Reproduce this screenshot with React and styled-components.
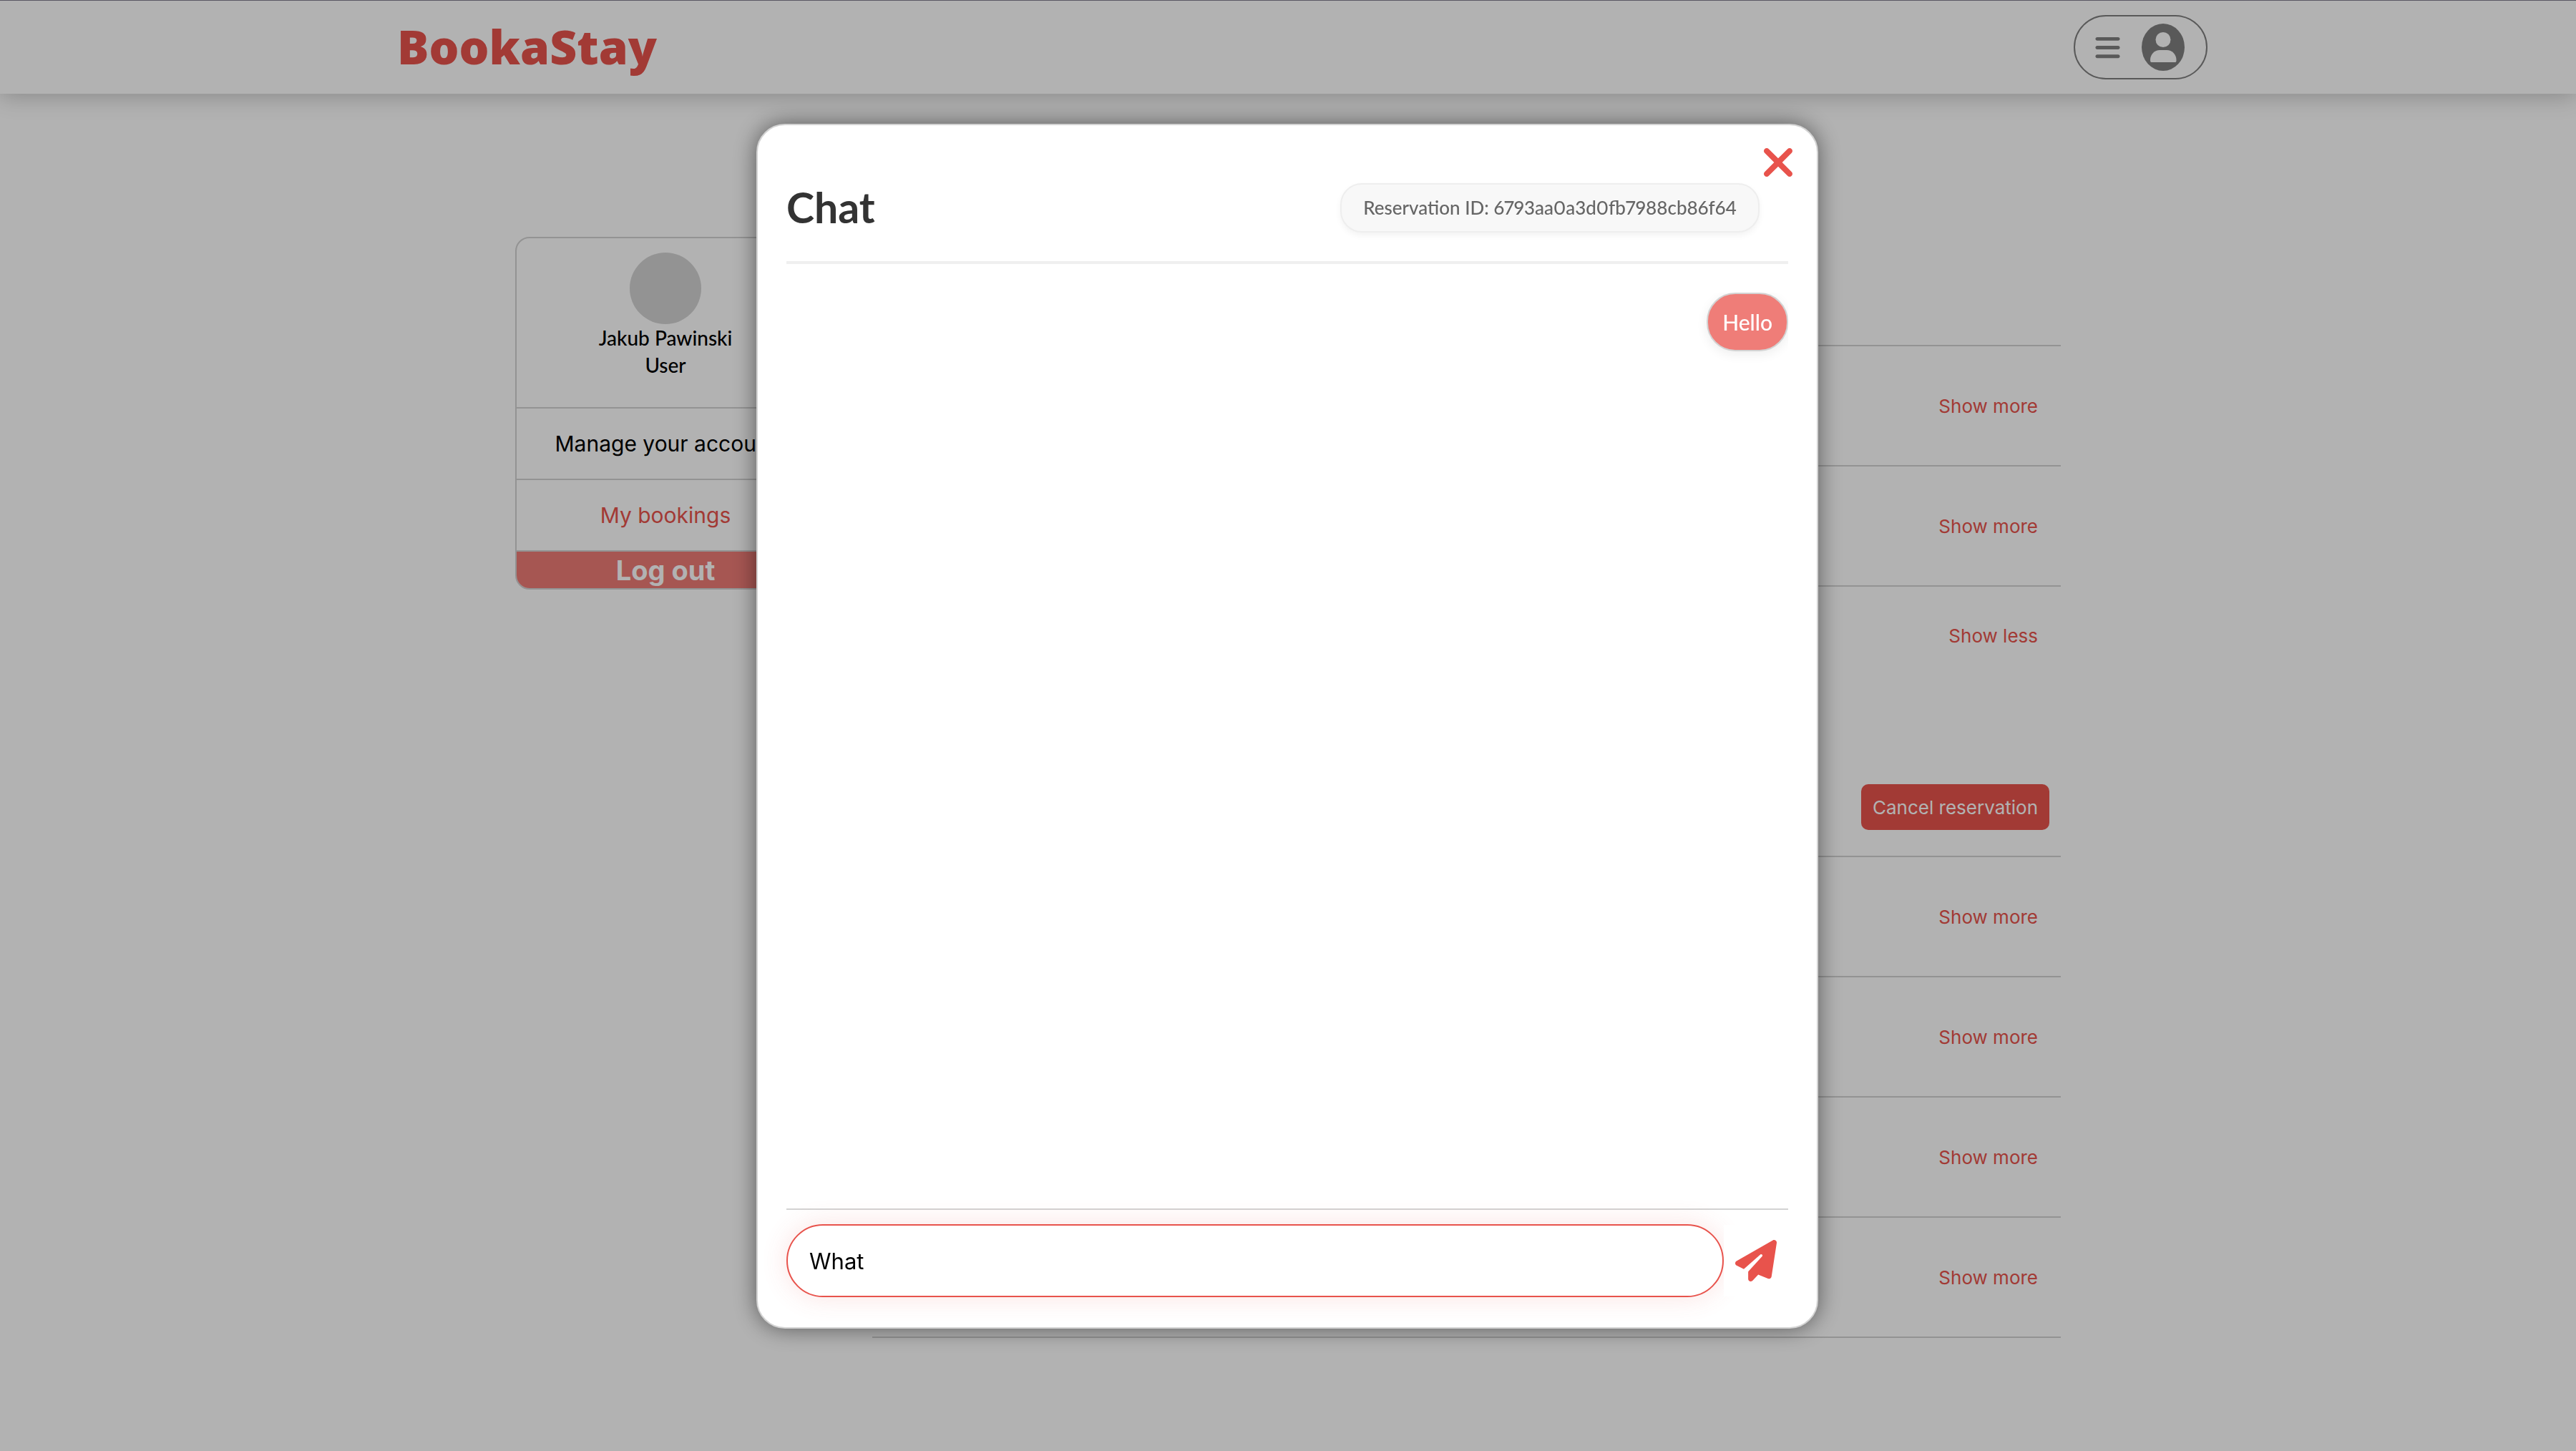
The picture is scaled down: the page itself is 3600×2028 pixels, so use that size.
import React, { useState } from "react";
import styled, { createGlobalStyle } from "styled-components";
import { FaBars, FaPaperPlane, FaXmark } from "react-icons/fa6";

const ui = `Inter, "Liberation Sans", sans-serif`;
const humanist = `Lato, "Open Sans", sans-serif`;
const red = "#e8534c";
const line = "#d3d3d3";

const GlobalStyle = createGlobalStyle`
  *, *::before, *::after { box-sizing: border-box; }
  body {
    margin: 0;
    background: #fff;
    color: #000;
    font-family: ${ui};
    font-size: 30px;
    overflow: hidden;
  }
  button { font-family: inherit; border: 0; padding: 0; cursor: pointer; }
  h1, h2, p, ul { margin: 0; padding: 0; }
`;

const Page = styled.div`
  min-height: 100vh;
`;

const TopBar = styled.header`
  display: flex;
  align-items: center;
  justify-content: space-between;
  height: 131px;
  padding: 0 515px 0 555px;
  border-top: 1px solid #827b8e;
  box-shadow: 0 4px 30px rgba(0, 0, 0, 0.23);
`;

const Logo = styled.a`
  padding-bottom: 4px;
  color: ${red};
  font-family: "Open Sans", Lato, sans-serif;
  font-size: 66px;
  font-weight: 800;
  line-height: 80px;
  text-decoration: none;
`;

const MenuButton = styled.button`
  display: flex;
  align-items: center;
  justify-content: space-between;
  width: 187px;
  height: 90px;
  padding: 0 30px 0 26px;
  border: 2px solid #808080;
  border-radius: 45px;
  background: transparent;
  color: #808080;
`;

const Main = styled.main`
  display: flex;
  align-items: flex-start;
  gap: 79px;
  width: 60%;
  margin: 0 auto;
  padding-top: 200px;
`;

const AccountCard = styled.aside`
  flex: 0 0 420px;
  border: 2px solid ${line};
  border-radius: 20px;
  overflow: hidden;
`;

const Profile = styled.div`
  display: flex;
  flex-direction: column;
  align-items: center;
  height: 236px;
  padding-top: 20px;
  font-family: ${humanist};
  font-weight: 500;
  font-size: 28px;
  line-height: 38px;
`;

const Avatar = styled.div`
  width: 100px;
  height: 100px;
  border-radius: 50%;
  background: ${line};
`;

const AccountLink = styled.a`
  display: flex;
  align-items: center;
  justify-content: center;
  height: 100px;
  border-top: 2px solid ${line};
  color: ${(p) => (p.$active ? red : "#000")};
  text-decoration: none;
`;

const LogoutButton = styled.button`
  display: block;
  width: 100%;
  height: 53px;
  border-top: 2px solid ${line};
  background: #ee7b76;
  color: #fff;
  font-size: 38px;
  font-weight: 700;
  line-height: 50px;
`;

const Bookings = styled.ul`
  flex: 1;
  margin-top: 151px;
  border-top: 2px solid ${line};
  list-style: none;
`;

const Booking = styled.li`
  display: flex;
  flex-direction: column;
  align-items: flex-end;
  justify-content: space-between;
  height: ${(p) => (p.$open ? 378 : 168)}px;
  padding: ${(p) => (p.$open ? "52px 16px 36px" : "67px 16px 65px")};
  border-bottom: 2px solid ${line};
`;

const ToggleButton = styled.button`
  padding: 0 16px;
  background: transparent;
  color: ${red};
  font-size: 26px;
  line-height: 34px;
`;

const CancelButton = styled.button`
  height: 64px;
  padding: 0 16px;
  border-radius: 10px;
  background: ${red};
  color: #fff;
  font-size: 26px;
`;

const Overlay = styled.div`
  position: fixed;
  inset: 0;
  display: flex;
  align-items: center;
  justify-content: center;
  padding: 2px 2px 0 0;
  background: rgba(0, 0, 0, 0.3);
`;

const Dialog = styled.section`
  position: relative;
  display: flex;
  flex-direction: column;
  width: min(1484px, 90vw);
  height: calc(100vh - 344px);
  padding: 40px 40px 42px;
  border: 2px solid ${line};
  border-radius: 40px;
  background: #fff;
  box-shadow: 0 0 32px rgba(0, 0, 0, 0.5);
`;

const CloseButton = styled.button`
  position: absolute;
  top: 20px;
  right: 22px;
  display: flex;
  background: transparent;
  color: ${red};
`;

const DialogHeader = styled.div`
  display: flex;
  align-items: center;
  justify-content: space-between;
  height: 154px;
  padding: 0 40px 0 0;
  border-bottom: 4px solid #efefef;
`;

const Title = styled.h2`
  color: #333;
  font-family: ${humanist};
  font-size: 59px;
  font-weight: 700;
  line-height: 70px;
`;

const ReservationTag = styled.p`
  padding: 15px 30px;
  border: 2px solid #eee;
  border-radius: 30px;
  background: #f8f8f8;
  box-shadow: 0 4px 8px rgba(0, 0, 0, 0.05);
  color: #666;
  font-family: ${humanist};
  font-size: 26px;
  font-variant-numeric: proportional-nums;
  font-weight: 500;
  line-height: 35px;
`;

const Messages = styled.div`
  flex: 1;
  display: flex;
  flex-direction: column;
  align-items: flex-end;
  margin-top: 40px;
  overflow: hidden auto;
`;

const Bubble = styled.p`
  padding: 19px 20px;
  border: 2px solid ${line};
  border-radius: 40px;
  background: #ef7d78;
  box-shadow: 0 4px 16px rgba(0, 0, 0, 0.07);
  color: #fff;
  font-family: ${humanist};
  font-size: 30px;
  font-weight: 500;
  line-height: 40px;
`;

const Composer = styled.form`
  display: flex;
  align-items: center;
  padding-top: 20px;
  border-top: 2px solid ${line};
`;

const MessageInput = styled.input`
  flex: 1;
  min-width: 0;
  height: 102px;
  padding: 0 30px;
  border: 2px solid ${red};
  border-radius: 51px;
  outline: 0;
  background: #fff;
  box-shadow: 0 0 36px rgba(232, 83, 76, 0.16);
  color: #000;
  font-family: ${ui};
  font-size: 31px;
`;

const SendButton = styled.button`
  position: relative;
  display: flex;
  padding: 21px 16px;
  background: #fff;
  color: ${red};
`;

function UserGlyph() {
  return (
    <svg width="60" height="66" viewBox="0 0 60 66" aria-hidden="true">
      <ellipse cx="30" cy="33" rx="30" ry="33" fill="currentColor" />
      <circle cx="30" cy="22.500" r="10.500" fill="#fff" />
      <path d="M12 51C12 43 18 37 25.500 37H35C42.500 37 48.500 43 48.500 51C48.500 53 48 54 47 54H13.500C12.500 54 12 53 12 51Z" fill="#fff" />
    </svg>
  );
}

const bookings = [
  { id: 1 },
  { id: 2 },
  { id: 3, open: true },
  { id: 4 },
  { id: 5 },
  { id: 6 },
  { id: 7 },
];

export default function App() {
  const [draft, setDraft] = useState("What");
  return (
    <>
      <GlobalStyle />
      <Page>
        <TopBar>
          <Logo href="#">BookaStay</Logo>
          <MenuButton aria-label="Account menu">
            <FaBars size={39} />
            <UserGlyph />
          </MenuButton>
        </TopBar>
        <Main>
          <AccountCard>
            <Profile>
              <Avatar />
              <span>Jakub Pawinski</span>
              <span>User</span>
            </Profile>
            <AccountLink href="#">Manage your account</AccountLink>
            <AccountLink href="#" $active>My bookings</AccountLink>
            <LogoutButton>Log out</LogoutButton>
          </AccountCard>
          <Bookings>
            {bookings.map((b) => (
              <Booking key={b.id} $open={b.open}>
                <ToggleButton>{b.open ? "Show less" : "Show more"}</ToggleButton>
                {b.open && <CancelButton>Cancel reservation</CancelButton>}
              </Booking>
            ))}
          </Bookings>
        </Main>
      </Page>
      <Overlay>
        <Dialog role="dialog" aria-label="Chat">
          <CloseButton aria-label="Close">
            <FaXmark size={64} />
          </CloseButton>
          <DialogHeader>
            <Title>Chat</Title>
            <ReservationTag>Reservation ID: 6793aa0a3d0fb7988cb86f64</ReservationTag>
          </DialogHeader>
          <Messages>
            <Bubble>Hello</Bubble>
          </Messages>
          <Composer onSubmit={(e) => e.preventDefault()}>
            <MessageInput
              aria-label="Message"
              value={draft}
              onChange={(e) => setDraft(e.target.value)}
            />
            <SendButton aria-label="Send">
              <FaPaperPlane size={58} />
            </SendButton>
          </Composer>
        </Dialog>
      </Overlay>
    </>
  );
}
